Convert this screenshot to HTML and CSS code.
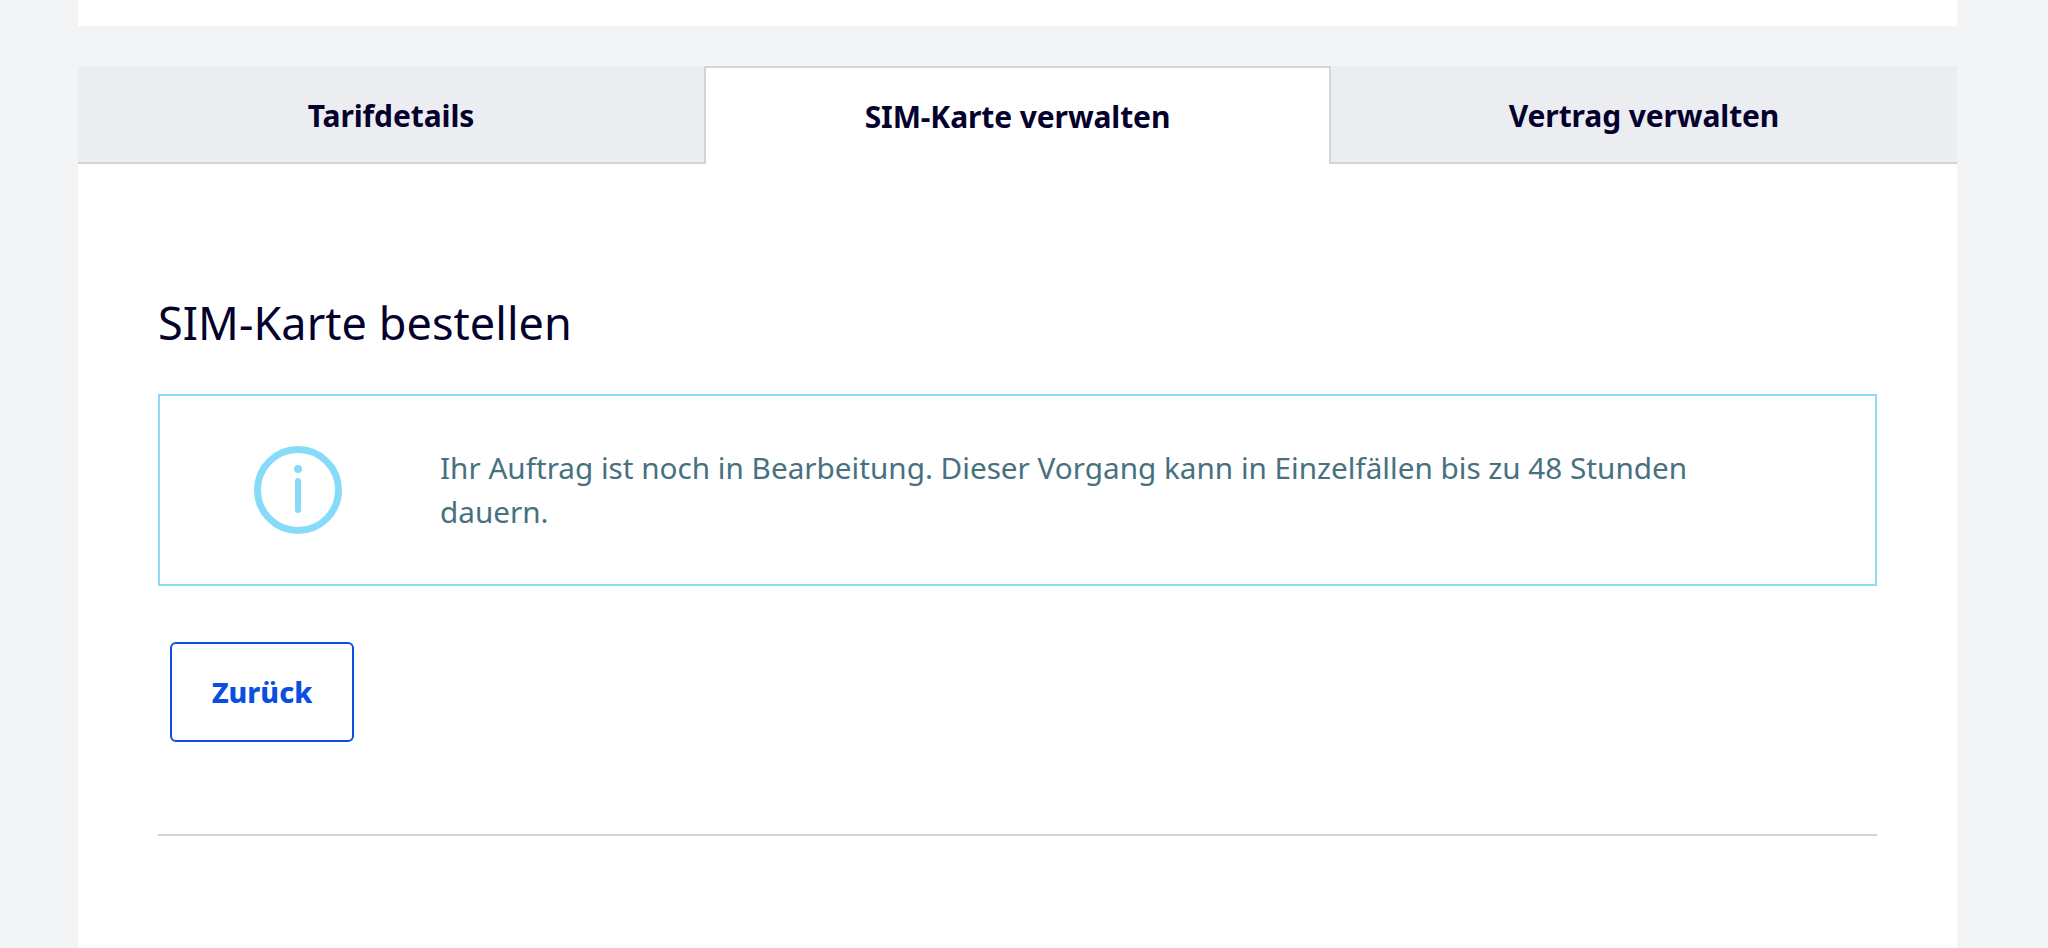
FILE: index.html
```html
<!DOCTYPE html>
<html lang="de">
<head>
<meta charset="UTF-8">
<meta name="viewport" content="width=device-width, initial-scale=1.0">
<title>SIM-Karte verwalten</title>
<link rel="stylesheet" href="styles.css">
</head>
<body>

<div class="top-card"></div>

<div class="panel">
  <div class="tabs">
    <a class="tab" href="#">Tarifdetails</a>
    <a class="tab active" href="#">SIM-Karte verwalten</a>
    <a class="tab" href="#">Vertrag verwalten</a>
  </div>

  <div class="content">
    <h2>SIM-Karte bestellen</h2>

    <div class="notice">
      <div class="notice-icon">
        <svg width="88" height="88" viewBox="0 0 88 88" fill="none">
          <circle cx="44" cy="44" r="40.5" stroke="#86dcf8" stroke-width="7"/>
          <circle cx="44" cy="23" r="4" fill="#86dcf8"/>
          <path d="M44 35v29" stroke="#86dcf8" stroke-width="6" stroke-linecap="round"/>
        </svg>
      </div>
      <p>Ihr Auftrag ist noch in Bearbeitung. Dieser Vorgang kann in Einzelfällen bis zu 48 Stunden dauern.</p>
    </div>

    <button class="back" type="button">Zurück</button>

    <hr>
  </div>
</div>

</body>
</html>
```

FILE: styles.css
```css
* {
  box-sizing: border-box;
}

body {
  margin: 0;
  padding: 0 91px 0 78px;
  min-height: 100vh;
  display: flex;
  flex-direction: column;
  background: #f3f4f6;
  font-family: "Noto Sans", sans-serif;
  color: #05012d;
}

.top-card {
  height: 26px;
  background: #fff;
}

.panel {
  flex: 1;
  margin-top: 40px;
  background: #fff;
}

.tabs {
  display: grid;
  grid-template-columns: 626px 627px 1fr;
  height: 98px;
}

.tab {
  display: flex;
  align-items: center;
  justify-content: center;
  padding-top: 3px;
  background: #ecedf0;
  border-bottom: 2px solid #d3d4d8;
  color: #05012d;
  font-size: 30px;
  font-weight: 700;
  letter-spacing: -0.1px;
  text-decoration: none;
}

.tab.active {
  padding-top: 1px;
  background: #fff;
  border: 2px solid #d3d4d8;
  border-bottom: none;
}

.content {
  padding: 129px 80px 0;
}

h2 {
  margin: 0;
  font-size: 45px;
  font-weight: 400;
  letter-spacing: 0.05px;
  line-height: 60px;
}

.notice {
  display: flex;
  align-items: center;
  height: 192px;
  margin-top: 41px;
  border: 2px solid #8cdcf4;
}

.notice-icon {
  display: flex;
  justify-content: center;
  width: 276px;
  margin-right: 4px;
  flex: none;
}

.notice p {
  margin: 0;
  max-width: 1300px;
  font-size: 29.7px;
  line-height: 44px;
  color: #47717f;
}

.back {
  display: block;
  width: 184px;
  height: 100px;
  margin: 56px 0 0 12px;
  background: #fff;
  border: 2px solid #0a4fe0;
  border-radius: 6px;
  color: #0a4fe0;
  font-family: inherit;
  font-size: 28.5px;
  font-weight: 800;
  cursor: pointer;
}

hr {
  height: 2px;
  margin: 92px 0 0;
  border: none;
  background: #d3d4d8;
}
```
